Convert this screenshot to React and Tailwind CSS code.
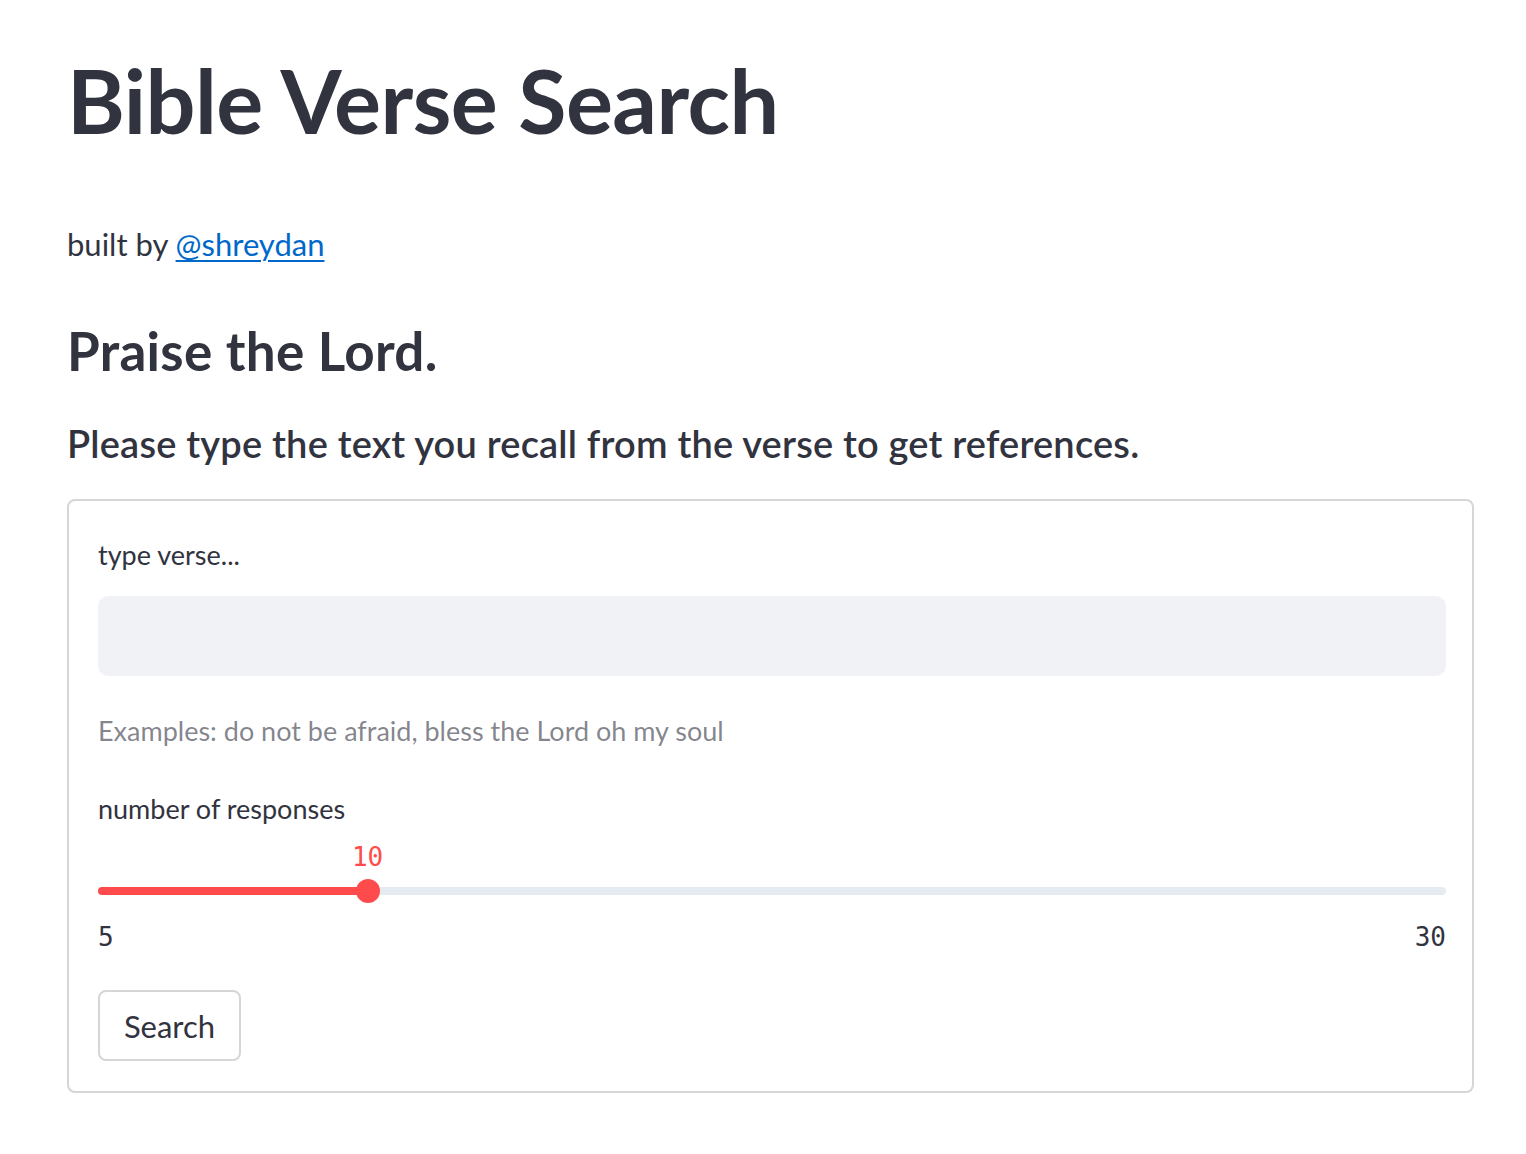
import React from "react";

const sans = "font-['Lato','Noto_Sans',sans-serif]";
const mono = "font-['DejaVu_Sans_Mono','Liberation_Mono',monospace]";

function Slider({ label, min, max, value }) {
  const pct = ((value - min) / (max - min)) * 100;
  return (
    <div className="flex flex-col">
      <p className="text-[27px] leading-[40px]">{label}</p>
      <div className="relative mt-[12px] h-[32px]">
        <span
          className={`absolute top-0 -translate-x-1/2 text-[26px] leading-[32px] text-[#ff4b4b] ${mono}`}
          style={{ left: `${pct}%` }}
        >
          {value}
        </span>
      </div>
      <div className="relative mt-[6px] flex h-[24px] items-center">
        <div className="h-[8px] w-full rounded-full bg-[#e6eaf1]">
          <div className="h-full rounded-full bg-[#ff4b4b]" style={{ width: `${pct}%` }}></div>
        </div>
        <div
          className="absolute top-0 h-[24px] w-[24px] -translate-x-1/2 rounded-full bg-[#ff4b4b]"
          style={{ left: `${pct}%` }}
        ></div>
      </div>
      <div className={`mt-[18px] flex justify-between text-[26px] leading-[32px] ${mono}`}>
        <span>{min}</span>
        <span>{max}</span>
      </div>
    </div>
  );
}

export default function App() {
  return (
    <div className={`min-h-[1154px] bg-white text-[#31333f] ${sans}`}>
      <div className="ml-[67px] flex w-[1407px] flex-col pt-[47px]">
        <h1 className="text-[88px] font-bold leading-[106px] tracking-[-0.5px]">Bible Verse Search</h1>
        <p className="mt-[71px] text-[31px] leading-[40px]">
          built by{" "}
          <a href="#" className="text-[#0068c9] underline decoration-[2px] underline-offset-[4px]">
            @shreydan
          </a>
        </p>
        <h2 className="mt-[54px] text-[53px] font-bold leading-[66px] tracking-[0.3px]">Praise the Lord.</h2>
        <h4 className="mt-[35px] text-[38px] font-semibold leading-[48px] tracking-[0.2px]">
          Please type the text you recall from the verse to get references.
        </h4>
        <form
          className="mt-[32px] flex h-[594px] flex-col items-start rounded-[8px] border-2 border-[#d6d6d9] pl-[29px] pr-[26px] pt-[34px]"
          onSubmit={(e) => e.preventDefault()}
        >
          <label className="text-[27px] leading-[40px]">type verse...</label>
          <div className="mt-[21px] h-[80px] w-full rounded-[10px] bg-[#f0f2f6]"></div>
          <p className="mt-[35px] text-[27px] leading-[40px] text-[#31333f99]">
            Examples: do not be afraid, bless the Lord oh my soul
          </p>
          <div className="mt-[38px] w-full">
            <Slider label="number of responses" min={5} max={30} value={10} />
          </div>
          <button
            type="submit"
            className="mt-[37px] h-[71px] w-[143px] rounded-[8px] border-2 border-[#d6d6d9] bg-white text-[31px] leading-[40px]"
          >
            Search
          </button>
        </form>
      </div>
    </div>
  );
}
